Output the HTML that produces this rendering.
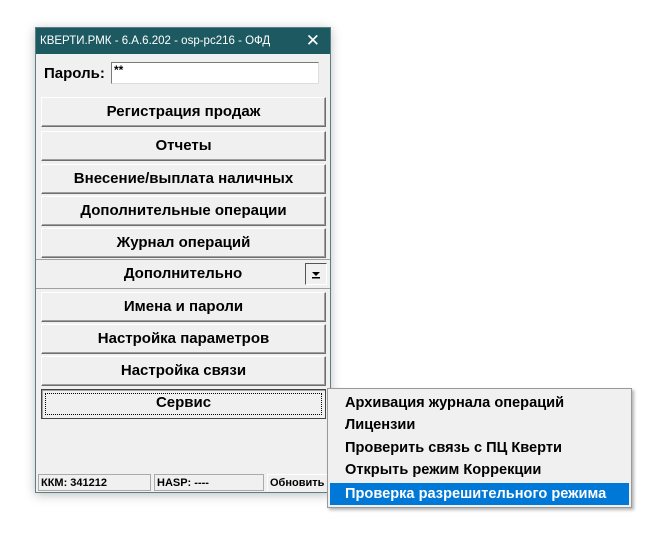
<!DOCTYPE html><html><head><meta charset="utf-8"><style>
body{margin:0;width:659px;height:539px;background:#fff;position:relative;overflow:hidden;font-family:"Liberation Sans",Arial,sans-serif}
.win{position:absolute;left:35px;top:27px;width:294px;height:464px;background:#f0f0f0;border:1px solid #5a7f85;box-shadow:0 2px 10px rgba(0,0,0,.25)}
.title{position:absolute;left:0;top:0;width:294px;height:26px;background:#1d5961;color:#fff;font-size:11.5px;line-height:26px}
.title span{position:absolute;left:4px}
.title b{position:absolute;right:10px;top:0;font-weight:normal;font-size:17px}
.lbl{position:absolute;left:8px;top:37px;font-weight:bold;font-size:15px}
.pw{position:absolute;left:75px;top:34px;width:208px;height:22px;background:#fff;border:1px solid #7a7a7a;border-right-color:#ddd;border-bottom-color:#ddd;font-size:12px;font-weight:bold;padding-left:2px;box-sizing:border-box;line-height:14px}
.b{position:absolute;left:5px;width:285px;height:30px;box-sizing:border-box;background:#f0f0f0;border:1px solid;border-color:#fff #6e6e6e #6e6e6e #fff;box-shadow:inset -1px -1px #a0a0a0;text-align:center;font-weight:bold;font-size:15px;line-height:27px}
.sec{position:absolute;left:0;top:231px;width:294px;height:30px;border-top:1px solid #a0a0a0;border-bottom:1px solid #a0a0a0;text-align:center;font-weight:bold;font-size:15px;line-height:27px;box-sizing:border-box}
.dd{position:absolute;right:3px;top:3px;width:22px;height:22px;border:1px solid #555;border-right-color:#fff;border-bottom-color:#fff;box-sizing:border-box}
.st{position:absolute;top:446px;height:17px;border:1px solid #aaa;font-size:11px;font-weight:bold;line-height:16px;box-sizing:border-box;padding-left:2px}
.menu{position:absolute;left:327px;top:388px;width:305px;height:120px;background:#f0f0f0;border:1px solid #999;box-shadow:2px 2px 3px rgba(0,0,0,.3);box-sizing:border-box}
.mi{position:absolute;left:2px;width:299px;height:22px;font-weight:bold;font-size:14.6px;line-height:22px;padding-left:15px;box-sizing:border-box}
</style></head><body>
<div class="win">
<div class="title"><span>КВЕРТИ.РМК - 6.А.6.202 - osp-pc216 - ОФД</span><b>✕</b></div>
<div class="lbl">Пароль:</div><div class="pw">**</div>
<div class="b" style="top:69px">Регистрация продаж</div>
<div class="b" style="top:103px">Отчеты</div>
<div class="b" style="top:136px">Внесение/выплата наличных</div>
<div class="b" style="top:168px">Дополнительные операции</div>
<div class="b" style="top:200px">Журнал операций</div>
<div class="sec">Дополнительно<div class="dd"><svg width="20" height="20" style="position:absolute;left:0;top:0"><path d="M6 8h8l-4 4z" fill="#000"/><rect x="6" y="13" width="8" height="1.5" fill="#000"/></svg></div></div>
<div class="b" style="top:264px">Имена и пароли</div>
<div class="b" style="top:296px">Настройка параметров</div>
<div class="b" style="top:328px">Настройка связи</div>
<div class="b" style="top:361px;border-color:#444 #444 #444 #444;box-shadow:inset 1px 1px #a0a0a0;line-height:25px"><div style="position:absolute;left:3px;top:3px;right:3px;bottom:3px;border:1px dotted #000"></div>Сервис</div>
<div class="st" style="left:2px;width:113px">ККМ: 341212</div>
<div class="st" style="left:118px;width:110px">HASP: ----</div>
<div class="st" style="left:231px;width:60px;border:none;border-top:1px solid #fff;border-left:1px solid #fff;padding-left:2px">Обновить</div>
</div>
<div class="menu">
<div class="mi" style="top:3px">Архивация журнала операций</div>
<div class="mi" style="top:25px">Лицензии</div>
<div class="mi" style="top:48px">Проверить связь с ПЦ Кверти</div>
<div class="mi" style="top:70px">Открыть режим Коррекции</div>
<div class="mi" style="top:94px;background:#0078d7;color:#fff">Проверка разрешительного режима</div>
</div>
</body></html>
